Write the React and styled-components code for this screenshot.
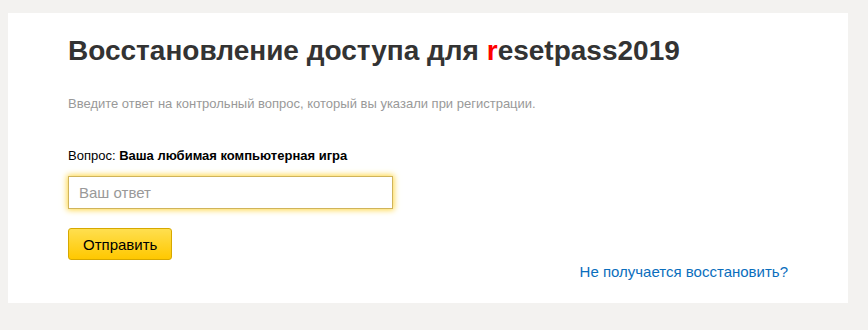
import React from 'react';
import styled, { createGlobalStyle } from 'styled-components';

const Global = createGlobalStyle`
  html, body {
    margin: 0;
    background: #f3f2f0;
    font-family: Arial, "Liberation Sans", sans-serif;
  }
  #root {
    padding: 13px 20px 27px 8px;
  }
`;

const Card = styled.div`
  background: #fff;
  height: 290px;
  box-sizing: border-box;
  padding: 19px 60px 0 60px;
  display: flex;
  flex-direction: column;
`;

const Title = styled.h1`
  margin: 0;
  font: 700 28px "Liberation Sans", Arial, sans-serif;
  color: #333;
  line-height: 38px;
`;

const Red = styled.span`
  color: #f00;
`;

const Hint = styled.p`
  margin: 26px 0 0;
  font-size: 13px;
  color: #999;
  line-height: 16px;
`;

const Question = styled.div`
  margin-top: 36px;
  font-size: 13px;
  color: #000;
  line-height: 16px;

  b {
    font-weight: 700;
  }
`;

const Input = styled.input`
  margin-top: 12px;
  width: 325px;
  height: 33px;
  box-sizing: border-box;
  border: 1px solid #d0b45a;
  padding: 0 10px;
  font: 15px "Liberation Sans", Arial, sans-serif;
  color: #000;
  outline: none;
  box-shadow: 0 0 6px 1px #ffd640;

  &::placeholder {
    color: #999;
  }
`;

const Button = styled.button`
  align-self: flex-start;
  margin-top: 19px;
  height: 32px;
  padding: 0 14px;
  border: 1px solid #d6a800;
  border-radius: 3px;
  background: linear-gradient(#ffdf4f, #ffc800);
  font: 15px "Liberation Sans", Arial, sans-serif;
  color: #000;
  cursor: pointer;
`;

const Footer = styled.div`
  display: flex;
  justify-content: flex-end;
  margin-top: 3px;
`;

const Link = styled.a`
  font-size: 15px;
  color: #0a6ebd;
  text-decoration: none;
  line-height: 18px;
`;

export default function App() {
  return (
    <>
      <Global />
      <Card>
        <Title>
          Восстановление доступа для <Red>r</Red>esetpass2019
        </Title>
        <Hint>Введите ответ на контрольный вопрос, который вы указали при регистрации.</Hint>
        <Question>
          Вопрос: <b>Ваша любимая компьютерная игра</b>
        </Question>
        <Input placeholder="Ваш ответ" autoFocus />
        <Button>Отправить</Button>
        <Footer>
          <Link href="#">Не получается восстановить?</Link>
        </Footer>
      </Card>
    </>
  );
}
